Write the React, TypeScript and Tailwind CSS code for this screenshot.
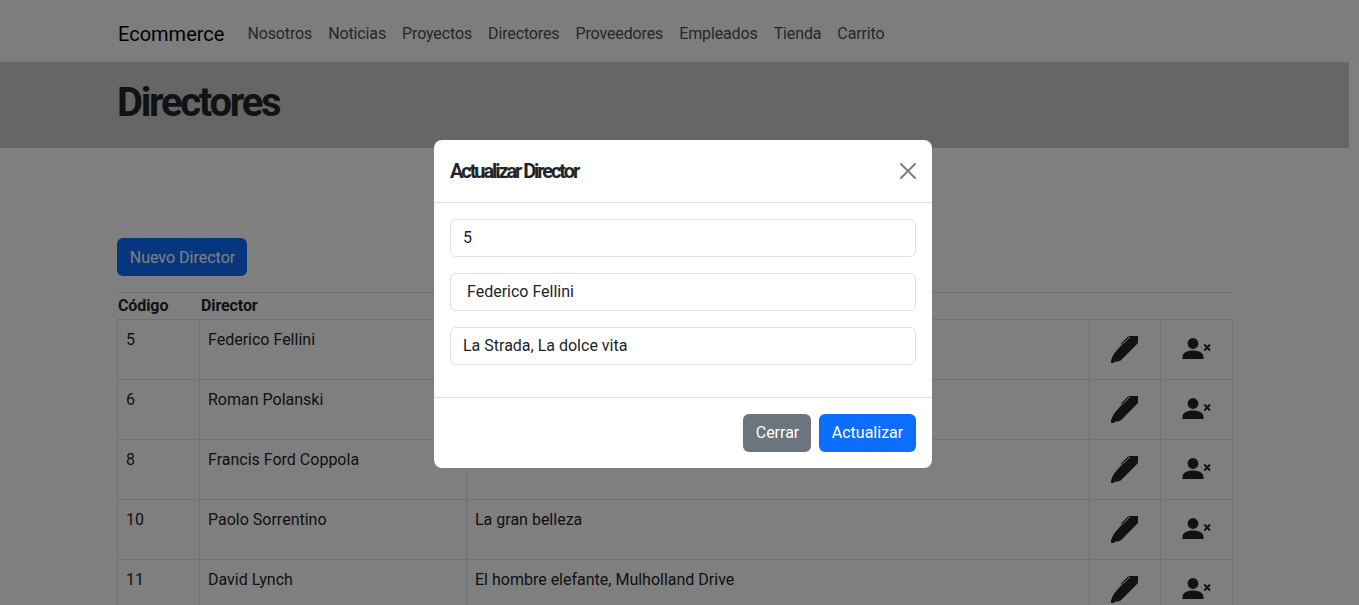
const navLinks = ["Nosotros", "Noticias", "Proyectos", "Directores", "Proveedores", "Empleados", "Tienda", "Carrito"];

const directors = [
  { code: "5", name: "Federico Fellini", films: "" },
  { code: "6", name: "Roman Polanski", films: "" },
  { code: "8", name: "Francis Ford Coppola", films: "" },
  { code: "10", name: "Paolo Sorrentino", films: "La gran belleza" },
  { code: "11", name: "David Lynch", films: "El hombre elefante, Mulholland Drive" },
];

const grid = "grid grid-cols-[82px_267px_623px_71px_72px]";

function PenIcon() {
  return (
    <svg width="27" height="27" viewBox="0 0 27 27" className="block">
      <path d="M18.500 0H27V7L10 24.300 7 25.500H4.500L2.500 27H0V24.500L1.500 20.500 3.500 17z" fill="#212529" />
      <path d="M10.500 8 17.800 0.700" stroke="#212529" strokeWidth="1.300" fill="none" />
      <path d="M11.500 8.300 18.800 1" stroke="#fff" strokeWidth="0.900" fill="none" />
    </svg>
  );
}

function RemoveUserIcon() {
  return (
    <svg width="30" height="22" viewBox="0 0 30 22" className="block">
      <circle cx="11" cy="5.5" r="5.4" fill="#212529" />
      <path d="M0.500 21v-2c0-4 4-6.500 10.500-6.500s10.500 2.500 10.500 6.500v2z" fill="#212529" />
      <path d="M22.300 6.500 28 12.500M28 6.500 22.300 12.500" stroke="#212529" strokeWidth="1.900" fill="none" />
    </svg>
  );
}

function Field({ value }: { value: string }) {
  return (
    <input
      defaultValue={value}
      className="block h-[38px] w-full rounded-md border border-[#dee2e6] bg-white px-3 pt-1 pb-1.5 text-base text-[#212529] outline-none"
    />
  );
}

export default function App() {
  return (
    <div className="relative h-[605px] w-full overflow-hidden bg-white font-[Roboto,sans-serif] text-base text-[#212529]">
      <nav className="flex h-[62px] items-center bg-[#fafafd] pt-1.5 pl-[118px]">
        <a className="mr-[15px] text-xl text-black">Ecommerce</a>
        <div className="flex tracking-[-0.13px]">
          {navLinks.map((label) => (
            <a key={label} className="px-2 text-[#4d4e50]">
              {label}
            </a>
          ))}
        </div>
      </nav>
      <header className="mr-2.5 h-[86px] bg-[#cccccc] pt-[17px] pl-[117px]">
        <h1 className="text-[40px] leading-12 font-bold tracking-[-2.3px]">Directores</h1>
      </header>
      <main className="mr-[126px] ml-[117px] pt-[90px]">
        <button className="block h-[38px] w-[130px] rounded-md bg-[#0d6efd] pt-px pl-px text-white">Nuevo Director</button>
        <div className={`${grid} mt-4 h-[27px] border-t border-[#dee2e6] leading-6 font-bold tracking-[-0.1px]`}>
          <div className="p-px">Código</div>
          <div className="p-px pl-0.5">Director</div>
        </div>
        <div className="border-t border-l border-[#dee2e6]">
          {directors.map((d) => (
            <div key={d.code} className={`${grid} h-[60px] *:border-r *:border-b *:border-[#dee2e6]`}>
              <div className="p-2">{d.code}</div>
              <div className="p-2">{d.name}</div>
              <div className="p-2">{d.films}</div>
              <div className="pt-4 pl-[21px]">
                <PenIcon />
              </div>
              <div className="pt-[18px] pl-[21px]">
                <RemoveUserIcon />
              </div>
            </div>
          ))}
        </div>
      </main>

      <div className="absolute inset-0 bg-black/50 pt-[140px] pl-[434px]">
        <section role="dialog" className="w-[498px] rounded-lg bg-white">
          <div className="flex h-[63px] items-center justify-between border-b border-[#dee2e6] px-4">
            <h2 className="text-xl font-bold tracking-[-2.1px]">Actualizar Director</h2>
            <svg width="16" height="16" viewBox="0 0 16 16" className="opacity-50">
              <path d="M.293.293a1 1 0 0 1 1.414 0L8 6.586 14.293.293a1 1 0 1 1 1.414 1.414L9.414 8l6.293 6.293a1 1 0 0 1-1.414 1.414L8 9.414l-6.293 6.293a1 1 0 0 1-1.414-1.414L6.586 8 .293 1.707a1 1 0 0 1 0-1.414z" />
            </svg>
          </div>
          <div className="flex flex-col gap-4 px-4 pt-4 pb-8">
            <Field value="5" />
            <Field value=" Federico Fellini" />
            <Field value="La Strada, La dolce vita" />
          </div>
          <div className="flex h-[71px] justify-end gap-2 border-t border-[#dee2e6] p-4">
            <button className="h-[38px] w-[68px] rounded-md bg-[#6c757d] pl-px text-white">Cerrar</button>
            <button className="h-[38px] w-[97px] rounded-md bg-[#0d6efd] text-white">Actualizar</button>
          </div>
        </section>
      </div>
    </div>
  );
}
